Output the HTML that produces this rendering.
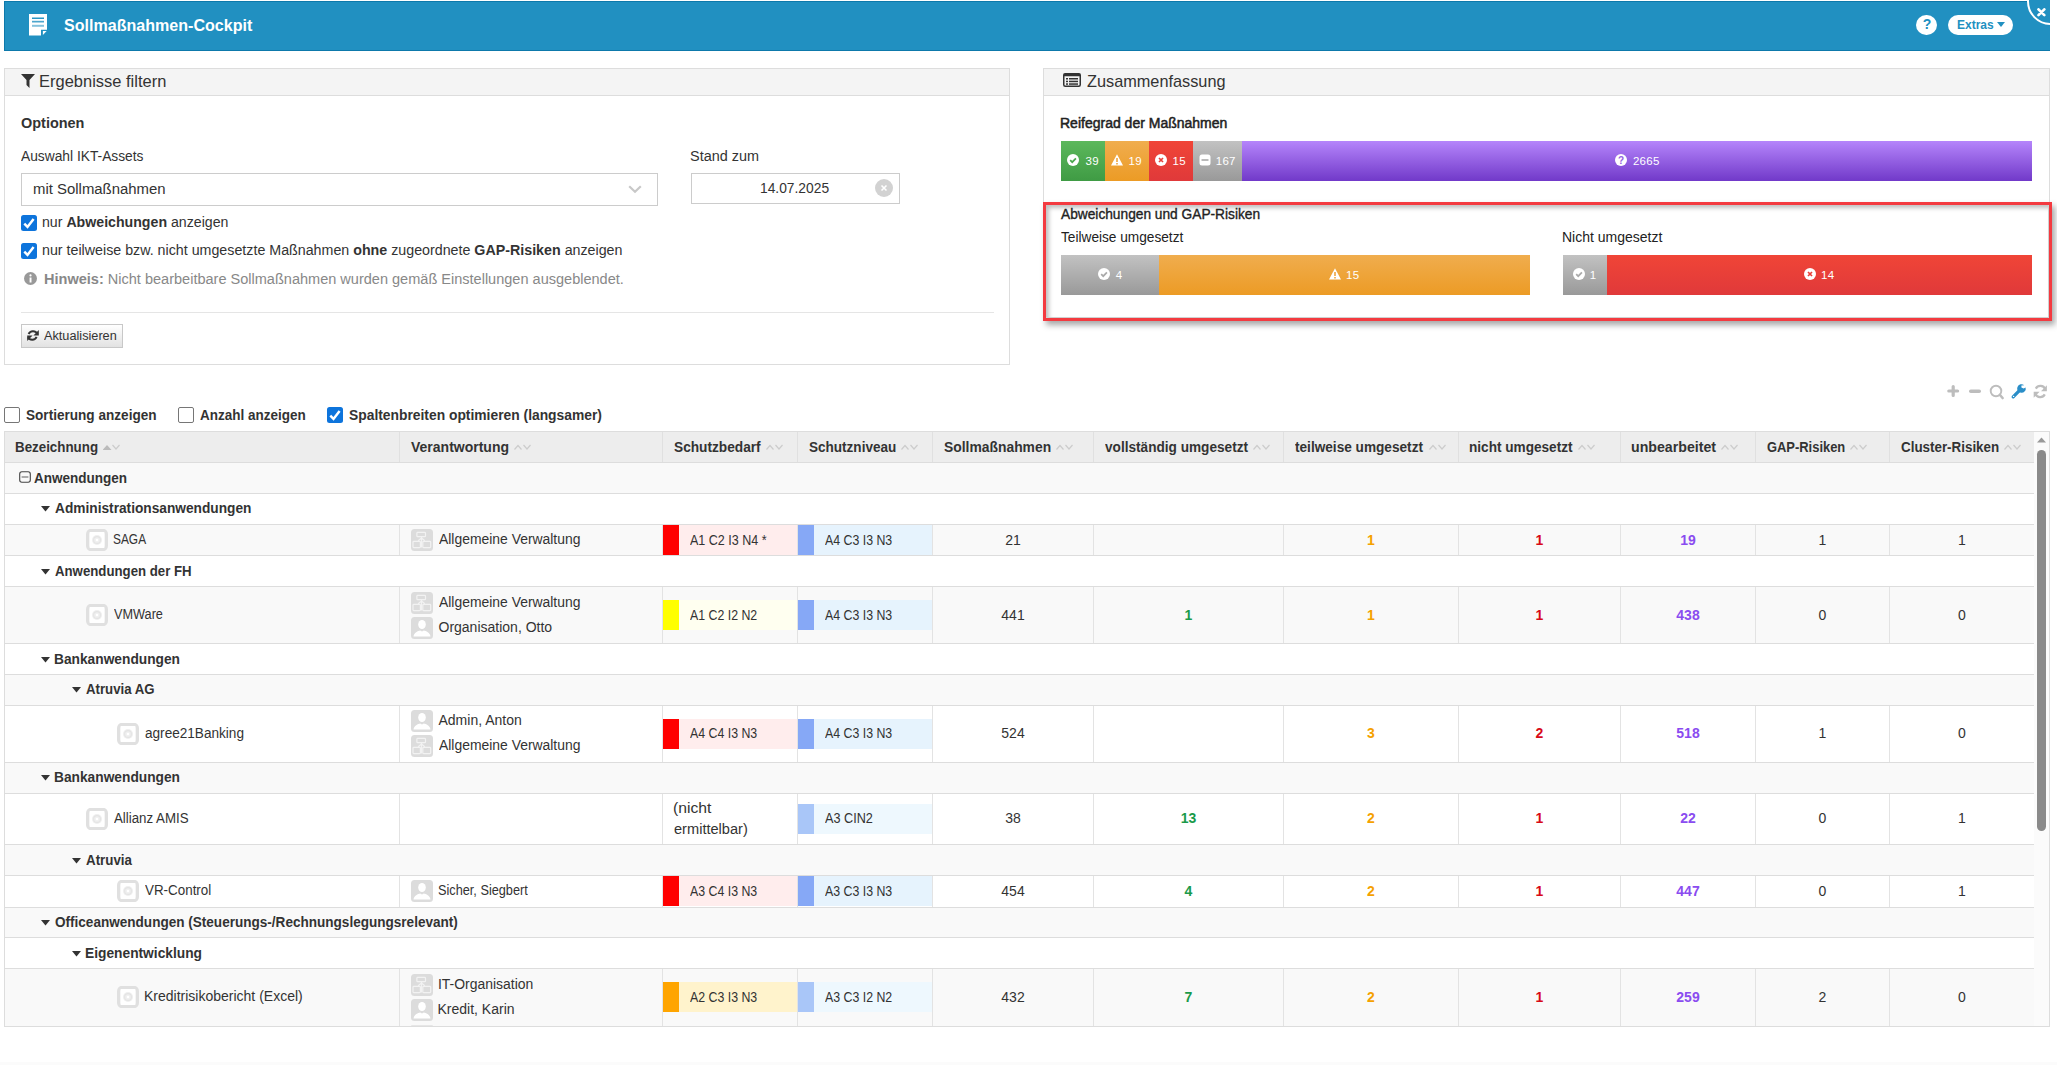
<!DOCTYPE html><html><head><meta charset="utf-8"><style>
html,body{margin:0;padding:0;width:2057px;height:1065px;overflow:hidden;background:#fff;font-family:"Liberation Sans", sans-serif;position:relative}
b{font-weight:700}
</style></head><body><div style="position:absolute;left:4px;top:1px;width:2046px;height:50px;background:#2190c1;box-sizing:border-box;border-top:1px solid #0d79ab;border-bottom:1px solid #0d79ab;border-left:1px solid #0d79ab"></div><div style="position:absolute;left:2020px;top:0px;width:30px;height:30px;overflow:hidden"><div style="position:absolute;left:7.2px;top:-22.2px;width:43px;height:43px;border:2px solid #fff;border-radius:50%;background:#2190c1"></div></div><svg style="position:absolute;left:29px;top:14px" width="19" height="22" viewBox="0 0 19 22"><path d="M0 0H18V15.7H12V21.4H0Z" fill="#fff"/><path d="M13.9 17.1H17.6L13.9 21Z" fill="#fff"/><rect x="3" y="3.5" width="12" height="1.5" fill="#2190c1" opacity="0.95"/><rect x="3" y="6.8" width="12" height="1.7" fill="#2190c1" opacity="0.8"/><rect x="3" y="10.8" width="12" height="2" fill="#2190c1" opacity="0.55"/></svg><div style="position:absolute;left:64.00px;top:17px;line-height:17px;font-size:17px;font-weight:700;color:#fff;white-space:pre;"><span id="t0" style="display:inline-block;transform-origin:left;transform:scaleX(0.9450)">Sollmaßnahmen-Cockpit</span></div><svg style="position:absolute;left:2036.5px;top:8px" width="9" height="8.5" viewBox="0 0 9 8.5"><path d="M1.5 1.4L7.3 7.1M7.3 1.4L1.5 7.1" stroke="#fff" stroke-width="2.7" stroke-linecap="round"/></svg><div style="position:absolute;left:1916px;top:14.5px;width:21px;height:20.5px;border-radius:50%;background:#fff"></div><div style="position:absolute;left:927px;width:2000px;text-align:center;top:17px;line-height:14px;font-size:14px;font-weight:700;color:#2190c1;white-space:pre;"><span id="t1" style="display:inline-block;transform-origin:left;">?</span></div><div style="position:absolute;left:1948px;top:15px;width:65px;height:20px;border-radius:10px;background:#fff"></div><div style="position:absolute;left:1957.08px;top:18px;line-height:13px;font-size:13px;font-weight:700;color:#2190c1;white-space:pre;"><span id="t2" style="display:inline-block;transform-origin:left;transform:scaleX(0.9231)">Extras</span></div><svg style="position:absolute;left:1997px;top:22px" width="8" height="6" viewBox="0 0 8 6"><path d="M0 0H8L4 5Z" fill="#2190c1"/></svg><div style="position:absolute;left:4px;top:68px;width:1006px;height:297px;box-sizing:border-box;border:1px solid #ddd;background:#fff"></div><div style="position:absolute;left:5px;top:69px;width:1004px;height:27px;background:#f4f4f4;border-bottom:1px solid #ddd;box-sizing:border-box"></div><svg style="position:absolute;left:21px;top:74px" width="14" height="14" viewBox="0 0 14 14"><path d="M0 0H14L8.5 6V14L5.5 11V6Z" fill="#333"/></svg><div style="position:absolute;left:39.03px;top:73px;line-height:17px;font-size:17px;font-weight:400;color:#333;white-space:pre;"><span id="t3" style="display:inline-block;transform-origin:left;transform:scaleX(0.9692)">Ergebnisse filtern</span></div><div style="position:absolute;left:21.00px;top:116px;line-height:14px;font-size:14px;font-weight:700;color:#333;white-space:pre;"><span id="t4" style="display:inline-block;transform-origin:left;transform:scaleX(1.0328)">Optionen</span></div><div style="position:absolute;left:21.00px;top:149px;line-height:14px;font-size:14px;font-weight:400;color:#333;white-space:pre;"><span id="t5" style="display:inline-block;transform-origin:left;transform:scaleX(0.9839)">Auswahl IKT-Assets</span></div><div style="position:absolute;left:21px;top:173px;width:637px;height:33px;box-sizing:border-box;border:1px solid #ccc;background:#fff"></div><div style="position:absolute;left:32.93px;top:182px;line-height:14px;font-size:14px;font-weight:400;color:#333;white-space:pre;"><span id="t6" style="display:inline-block;transform-origin:left;transform:scaleX(1.0650)">mit Sollmaßnahmen</span></div><svg style="position:absolute;left:628px;top:185px" width="14" height="9" viewBox="0 0 14 9"><path d="M1.2 1.2L7 6.8L12.8 1.2" stroke="#c8c8c8" stroke-width="2.2" fill="none"/></svg><div style="position:absolute;left:689.97px;top:149px;line-height:14px;font-size:14px;font-weight:400;color:#333;white-space:pre;"><span id="t7" style="display:inline-block;transform-origin:left;transform:scaleX(1.0308)">Stand zum</span></div><div style="position:absolute;left:691px;top:173px;width:209px;height:31px;box-sizing:border-box;border:1px solid #ccc;background:#fff"></div><div style="position:absolute;left:-205px;width:2000px;text-align:center;top:181px;line-height:14px;font-size:14px;font-weight:400;color:#333;white-space:pre;"><span id="t8" style="display:inline-block;transform-origin:left;transform:scaleX(0.9855)">14.07.2025</span></div><div style="position:absolute;left:875px;top:179px;width:18px;height:18px;border-radius:50%;background:#d2d2d2"></div><svg style="position:absolute;left:880px;top:184px" width="8" height="8" viewBox="0 0 8 8"><path d="M1.5 1.5L6.5 6.5M6.5 1.5L1.5 6.5" stroke="#fff" stroke-width="1.6"/></svg><div style="position:absolute;left:21px;top:215px;width:16px;height:16px;border-radius:2.5px;background:#0d74dc"></div><svg style="position:absolute;left:21px;top:215px" width="16" height="16" viewBox="0 0 16 16"><path d="M3.3 8.7L6.5 11.9L12.6 3.9" stroke="#fff" stroke-width="2.5" fill="none"/></svg><div style="position:absolute;left:42.49px;top:215px;line-height:14px;font-size:14px;font-weight:400;color:#333;white-space:pre;"><span id="t9" style="display:inline-block;transform-origin:left;transform:scaleX(1.0109)">nur <b>Abweichungen</b> anzeigen</span></div><div style="position:absolute;left:21px;top:243px;width:16px;height:16px;border-radius:2.5px;background:#0d74dc"></div><svg style="position:absolute;left:21px;top:243px" width="16" height="16" viewBox="0 0 16 16"><path d="M3.3 8.7L6.5 11.9L12.6 3.9" stroke="#fff" stroke-width="2.5" fill="none"/></svg><div style="position:absolute;left:42.48px;top:243px;line-height:14px;font-size:14px;font-weight:400;color:#333;white-space:pre;"><span id="t10" style="display:inline-block;transform-origin:left;transform:scaleX(1.0176)">nur teilweise bzw. nicht umgesetzte Maßnahmen <b>ohne</b> zugeordnete <b>GAP-Risiken</b> anzeigen</span></div><svg style="position:absolute;left:24px;top:272px" width="13" height="13" viewBox="0 0 13 13"><circle cx="6.5" cy="6.5" r="6.5" fill="#999"/><rect x="5.6" y="5.5" width="1.9" height="5" fill="#fff"/><circle cx="6.5" cy="3.4" r="1.1" fill="#fff"/></svg><div style="position:absolute;left:43.96px;top:272px;line-height:14px;font-size:14px;font-weight:400;color:#888;white-space:pre;"><span id="t11" style="display:inline-block;transform-origin:left;transform:scaleX(1.0377)"><b>Hinweis:</b> Nicht bearbeitbare Sollmaßnahmen wurden gemäß Einstellungen ausgeblendet.</span></div><div style="position:absolute;left:21px;top:312px;width:973px;height:1px;background:#e5e5e5"></div><div style="position:absolute;left:21px;top:324px;width:102px;height:24px;box-sizing:border-box;border:1px solid #c8c8c8;background:linear-gradient(#fff,#e2e2e2)"></div><svg style="position:absolute;left:26px;top:329px" width="14" height="13" viewBox="0 0 14 13"><path d="M11.3 4.6A4.9 4.9 0 0 0 2.6 5" stroke="#333" stroke-width="2" fill="none"/><path d="M12.8 1V6.4H7.4Z" fill="#333"/><path d="M1.9 8.2A4.9 4.9 0 0 0 10.6 7.8" stroke="#333" stroke-width="2" fill="none"/><path d="M1.2 11.9V6.5H6.6Z" fill="#333"/></svg><div style="position:absolute;left:44.00px;top:330px;line-height:12px;font-size:12px;font-weight:400;color:#333;white-space:pre;"><span id="t12" style="display:inline-block;transform-origin:left;transform:scaleX(1.0588)">Aktualisieren</span></div><div style="position:absolute;left:1043px;top:68px;width:1007px;height:140px;box-sizing:border-box;border:1px solid #ddd;border-bottom:none;background:#fff"></div><div style="position:absolute;left:1044px;top:69px;width:1005px;height:27px;background:#f4f4f4;border-bottom:1px solid #ddd;box-sizing:border-box"></div><svg style="position:absolute;left:1063px;top:73px" width="18" height="14" viewBox="0 0 18 14"><rect x="0.75" y="0.75" width="16.5" height="12.5" rx="1.5" fill="none" stroke="#333" stroke-width="1.5"/><rect x="0.75" y="0.75" width="16.5" height="2.5" fill="#333"/><rect x="3" y="5" width="2" height="1.5" fill="#333"/><rect x="6" y="5" width="9" height="1.5" fill="#333"/><rect x="3" y="7.7" width="2" height="1.5" fill="#333"/><rect x="6" y="7.7" width="9" height="1.5" fill="#333"/><rect x="3" y="10.3" width="2" height="1.5" fill="#333"/><rect x="6" y="10.3" width="9" height="1.5" fill="#333"/></svg><div style="position:absolute;left:1087.00px;top:73px;line-height:17px;font-size:17px;font-weight:400;color:#333;white-space:pre;"><span id="t13" style="display:inline-block;transform-origin:left;transform:scaleX(0.9583)">Zusammenfassung</span></div><div style="position:absolute;left:1060.00px;top:116px;line-height:14px;font-size:14px;font-weight:400;color:#222;white-space:pre;-webkit-text-stroke:0.5px #222;"><span id="t14" style="display:inline-block;transform-origin:left;">Reifegrad der Maßnahmen</span></div><div style="position:absolute;left:1061px;top:141px;width:44px;height:40px;background:linear-gradient(#5cb85c,#3f9b44)"></div><svg style="position:absolute;left:1067.3px;top:154.1px" width="12" height="12" viewBox="0 0 12 12"><circle cx="6" cy="6" r="6" fill="#fff"/><path d="M3.2 6.2L5.2 8.2L8.9 4.3" stroke="#4aa84d" stroke-width="1.7" fill="none"/></svg><div style="position:absolute;left:1085.50px;top:156px;line-height:11.5px;font-size:11.5px;font-weight:400;color:#fff;white-space:pre;letter-spacing:0.3px;"><span id="t15" style="display:inline-block;transform-origin:left;">39</span></div><div style="position:absolute;left:1105px;top:141px;width:44px;height:40px;background:linear-gradient(#f0ad4e,#ec9b25)"></div><svg style="position:absolute;left:1111.3px;top:154.1px" width="12" height="12" viewBox="0 0 12 12"><path d="M6 0.3L12 11.5H0Z" fill="#fff"/><rect x="5.2" y="4" width="1.6" height="4" fill="#eea53f"/><rect x="5.2" y="9" width="1.6" height="1.5" fill="#eea53f"/></svg><div style="position:absolute;left:1128.50px;top:156px;line-height:11.5px;font-size:11.5px;font-weight:400;color:#fff;white-space:pre;letter-spacing:0.3px;"><span id="t16" style="display:inline-block;transform-origin:left;">19</span></div><div style="position:absolute;left:1149px;top:141px;width:44px;height:40px;background:linear-gradient(#f04537,#e0393a)"></div><svg style="position:absolute;left:1155.3px;top:154.1px" width="12" height="12" viewBox="0 0 12 12"><circle cx="6" cy="6" r="6" fill="#fff"/><path d="M4 4L8 8M8 4L4 8" stroke="#e8403a" stroke-width="1.7"/></svg><div style="position:absolute;left:1172.50px;top:156px;line-height:11.5px;font-size:11.5px;font-weight:400;color:#fff;white-space:pre;letter-spacing:0.3px;"><span id="t17" style="display:inline-block;transform-origin:left;">15</span></div><div style="position:absolute;left:1193px;top:141px;width:49px;height:40px;background:linear-gradient(#c2c2c2,#999)"></div><svg style="position:absolute;left:1198.5px;top:154.1px" width="12" height="12" viewBox="0 0 12 12"><rect x="0.5" y="0.5" width="11" height="11" rx="2.5" fill="#fff"/><rect x="2.5" y="5.2" width="7" height="1.6" fill="#aaa"/></svg><div style="position:absolute;left:1215.70px;top:156px;line-height:11.5px;font-size:11.5px;font-weight:400;color:#fff;white-space:pre;letter-spacing:0.3px;"><span id="t18" style="display:inline-block;transform-origin:left;">167</span></div><div style="position:absolute;left:1242px;top:141px;width:790px;height:40px;background:linear-gradient(#b585fb,#7139c9)"></div><svg style="position:absolute;left:1614.7px;top:154.1px" width="12" height="12" viewBox="0 0 12 12"><circle cx="6" cy="6" r="6" fill="#fff"/><text x="6" y="9.7" font-family="Liberation Sans" font-weight="700" font-size="10" text-anchor="middle" fill="#9460e0">?</text></svg><div style="position:absolute;left:1632.90px;top:156px;line-height:11.5px;font-size:11.5px;font-weight:400;color:#fff;white-space:pre;letter-spacing:0.3px;"><span id="t19" style="display:inline-block;transform-origin:left;">2665</span></div><div style="position:absolute;left:1043px;top:202px;width:1009px;height:119px;box-sizing:border-box;border:3px solid #f33a40;background:#fff;box-shadow:3px 4px 6px rgba(0,0,0,0.35), inset 3px 3px 4px rgba(0,0,0,0.25)"></div><div style="position:absolute;left:1046px;top:205px;width:1003px;height:113px;box-sizing:border-box;border-right:1px solid #d0d0d0;border-bottom:1px solid #d0d0d0"></div><div style="position:absolute;left:1061.00px;top:207px;line-height:14px;font-size:14px;font-weight:400;color:#222;white-space:pre;-webkit-text-stroke:0.35px #222;"><span id="t20" style="display:inline-block;transform-origin:left;transform:scaleX(0.9803)">Abweichungen und GAP-Risiken</span></div><div style="position:absolute;left:1061.00px;top:230px;line-height:14px;font-size:14px;font-weight:400;color:#222;white-space:pre;"><span id="t21" style="display:inline-block;transform-origin:left;transform:scaleX(0.9762)">Teilweise umgesetzt</span></div><div style="position:absolute;left:1562.00px;top:230px;line-height:14px;font-size:14px;font-weight:400;color:#222;white-space:pre;"><span id="t22" style="display:inline-block;transform-origin:left;">Nicht umgesetzt</span></div><div style="position:absolute;left:1061px;top:255px;width:98px;height:40px;background:linear-gradient(#c2c2c2,#999)"></div><svg style="position:absolute;left:1097.6px;top:268.1px" width="12" height="12" viewBox="0 0 12 12"><circle cx="6" cy="6" r="6" fill="#fff"/><path d="M3.2 6.2L5.2 8.2L8.9 4.3" stroke="#aaa" stroke-width="1.7" fill="none"/></svg><div style="position:absolute;left:1115.80px;top:270px;line-height:11.5px;font-size:11.5px;font-weight:400;color:#fff;white-space:pre;letter-spacing:0.3px;"><span id="t23" style="display:inline-block;transform-origin:left;">4</span></div><div style="position:absolute;left:1159px;top:255px;width:371px;height:40px;background:linear-gradient(#f0ad4e,#ec9b25)"></div><svg style="position:absolute;left:1328.8px;top:268.1px" width="12" height="12" viewBox="0 0 12 12"><path d="M6 0.3L12 11.5H0Z" fill="#fff"/><rect x="5.2" y="4" width="1.6" height="4" fill="#eea53f"/><rect x="5.2" y="9" width="1.6" height="1.5" fill="#eea53f"/></svg><div style="position:absolute;left:1346.00px;top:270px;line-height:11.5px;font-size:11.5px;font-weight:400;color:#fff;white-space:pre;letter-spacing:0.3px;"><span id="t24" style="display:inline-block;transform-origin:left;">15</span></div><div style="position:absolute;left:1563px;top:255px;width:44px;height:40px;background:linear-gradient(#c2c2c2,#999)"></div><svg style="position:absolute;left:1572.6px;top:268.1px" width="12" height="12" viewBox="0 0 12 12"><circle cx="6" cy="6" r="6" fill="#fff"/><path d="M3.2 6.2L5.2 8.2L8.9 4.3" stroke="#aaa" stroke-width="1.7" fill="none"/></svg><div style="position:absolute;left:1589.80px;top:270px;line-height:11.5px;font-size:11.5px;font-weight:400;color:#fff;white-space:pre;letter-spacing:0.3px;"><span id="t25" style="display:inline-block;transform-origin:left;">1</span></div><div style="position:absolute;left:1607px;top:255px;width:425px;height:40px;background:linear-gradient(#f04537,#e0393a)"></div><svg style="position:absolute;left:1803.8px;top:268.1px" width="12" height="12" viewBox="0 0 12 12"><circle cx="6" cy="6" r="6" fill="#fff"/><path d="M4 4L8 8M8 4L4 8" stroke="#e8403a" stroke-width="1.7"/></svg><div style="position:absolute;left:1821.00px;top:270px;line-height:11.5px;font-size:11.5px;font-weight:400;color:#fff;white-space:pre;letter-spacing:0.3px;"><span id="t26" style="display:inline-block;transform-origin:left;">14</span></div><div style="position:absolute;left:4px;top:407px;width:16px;height:16px;border-radius:2px;box-sizing:border-box;border:1px solid #767676;background:#fff"></div><div style="position:absolute;left:26.00px;top:408px;line-height:14px;font-size:14px;font-weight:700;color:#333;white-space:pre;"><span id="t27" style="display:inline-block;transform-origin:left;transform:scaleX(0.9701)">Sortierung anzeigen</span></div><div style="position:absolute;left:178px;top:407px;width:16px;height:16px;border-radius:2px;box-sizing:border-box;border:1px solid #767676;background:#fff"></div><div style="position:absolute;left:200.00px;top:408px;line-height:14px;font-size:14px;font-weight:700;color:#333;white-space:pre;"><span id="t28" style="display:inline-block;transform-origin:left;transform:scaleX(0.9633)">Anzahl anzeigen</span></div><div style="position:absolute;left:327px;top:407px;width:16px;height:16px;border-radius:2.5px;background:#0d74dc"></div><svg style="position:absolute;left:327px;top:407px" width="16" height="16" viewBox="0 0 16 16"><path d="M3.3 8.7L6.5 11.9L12.6 3.9" stroke="#fff" stroke-width="2.5" fill="none"/></svg><div style="position:absolute;left:349.00px;top:408px;line-height:14px;font-size:14px;font-weight:700;color:#333;white-space:pre;"><span id="t29" style="display:inline-block;transform-origin:left;transform:scaleX(0.9883)">Spaltenbreiten optimieren (langsamer)</span></div><svg style="position:absolute;left:1940px;top:380px" width="117" height="25" viewBox="1940 380 117 25"><path d="M1953.2 386.6V395.4M1948.8 391H1957.6" stroke="#bdbdbd" stroke-width="3.2" stroke-linecap="round"/><path d="M1970.75 391.2H1979.25" stroke="#bdbdbd" stroke-width="3.5" stroke-linecap="round"/><circle cx="1996" cy="391" r="5.3" stroke="#bdbdbd" stroke-width="1.9" fill="none"/><path d="M2000 395L2002.6 398" stroke="#bdbdbd" stroke-width="2.6" stroke-linecap="round"/><path d="M2013.2 396.8L2019.8 390.2" stroke="#2a8ec8" stroke-width="3.3" stroke-linecap="round"/><path d="M2024.2 385.2A4.3 4.3 0 1 0 2025.6 387.4L2023.6 388.6L2021.4 387.6L2021.4 385.6Z" fill="#2a8ec8"/><circle cx="2013.6" cy="396.4" r="0.7" fill="#fff"/><path d="M2045.2 389.2A5.2 5.2 0 0 0 2035.8 388.6" stroke="#bdbdbd" stroke-width="2.2" fill="none"/><path d="M2046.9 385.2V391.2H2041Z" fill="#bdbdbd"/><path d="M2035.4 393.8A5.2 5.2 0 0 0 2044.8 394.4" stroke="#bdbdbd" stroke-width="2.2" fill="none"/><path d="M2033.7 397.8V391.8H2039.6Z" fill="#bdbdbd"/></svg><div style="position:absolute;left:4px;top:431px;width:2046px;height:596px;box-sizing:border-box;border:1px solid #ddd;background:#fff"></div><div style="position:absolute;left:5px;top:432px;width:2029px;height:30px;background:#ededed"></div><div style="position:absolute;left:5px;top:463px;width:2029px;height:30px;background:#f9f9f9"></div><div style="position:absolute;left:5px;top:494px;width:2029px;height:30px;background:#fff"></div><div style="position:absolute;left:5px;top:525px;width:2029px;height:30px;background:#f9f9f9"></div><div style="position:absolute;left:5px;top:556px;width:2029px;height:30px;background:#fff"></div><div style="position:absolute;left:5px;top:587px;width:2029px;height:56px;background:#f9f9f9"></div><div style="position:absolute;left:5px;top:644px;width:2029px;height:30px;background:#fff"></div><div style="position:absolute;left:5px;top:675px;width:2029px;height:30px;background:#f9f9f9"></div><div style="position:absolute;left:5px;top:706px;width:2029px;height:56px;background:#fff"></div><div style="position:absolute;left:5px;top:763px;width:2029px;height:30px;background:#f9f9f9"></div><div style="position:absolute;left:5px;top:794px;width:2029px;height:50px;background:#fff"></div><div style="position:absolute;left:5px;top:845px;width:2029px;height:30px;background:#f9f9f9"></div><div style="position:absolute;left:5px;top:876px;width:2029px;height:31px;background:#fff"></div><div style="position:absolute;left:5px;top:908px;width:2029px;height:29px;background:#f9f9f9"></div><div style="position:absolute;left:5px;top:938px;width:2029px;height:30px;background:#fff"></div><div style="position:absolute;left:5px;top:969px;width:2029px;height:57px;background:#f9f9f9"></div><div style="position:absolute;left:5px;top:462px;width:2029px;height:1px;background:#ddd"></div><div style="position:absolute;left:5px;top:493px;width:2029px;height:1px;background:#ddd"></div><div style="position:absolute;left:5px;top:524px;width:2029px;height:1px;background:#ddd"></div><div style="position:absolute;left:5px;top:555px;width:2029px;height:1px;background:#ddd"></div><div style="position:absolute;left:5px;top:586px;width:2029px;height:1px;background:#ddd"></div><div style="position:absolute;left:5px;top:643px;width:2029px;height:1px;background:#ddd"></div><div style="position:absolute;left:5px;top:674px;width:2029px;height:1px;background:#ddd"></div><div style="position:absolute;left:5px;top:705px;width:2029px;height:1px;background:#ddd"></div><div style="position:absolute;left:5px;top:762px;width:2029px;height:1px;background:#ddd"></div><div style="position:absolute;left:5px;top:793px;width:2029px;height:1px;background:#ddd"></div><div style="position:absolute;left:5px;top:844px;width:2029px;height:1px;background:#ddd"></div><div style="position:absolute;left:5px;top:875px;width:2029px;height:1px;background:#ddd"></div><div style="position:absolute;left:5px;top:907px;width:2029px;height:1px;background:#ddd"></div><div style="position:absolute;left:5px;top:937px;width:2029px;height:1px;background:#ddd"></div><div style="position:absolute;left:5px;top:968px;width:2029px;height:1px;background:#ddd"></div><div style="position:absolute;left:399px;top:432px;width:1px;height:30px;background:#e0e0e0"></div><div style="position:absolute;left:662px;top:432px;width:1px;height:30px;background:#e0e0e0"></div><div style="position:absolute;left:797px;top:432px;width:1px;height:30px;background:#e0e0e0"></div><div style="position:absolute;left:932px;top:432px;width:1px;height:30px;background:#e0e0e0"></div><div style="position:absolute;left:1093px;top:432px;width:1px;height:30px;background:#e0e0e0"></div><div style="position:absolute;left:1283px;top:432px;width:1px;height:30px;background:#e0e0e0"></div><div style="position:absolute;left:1458px;top:432px;width:1px;height:30px;background:#e0e0e0"></div><div style="position:absolute;left:1620px;top:432px;width:1px;height:30px;background:#e0e0e0"></div><div style="position:absolute;left:1755px;top:432px;width:1px;height:30px;background:#e0e0e0"></div><div style="position:absolute;left:1889px;top:432px;width:1px;height:30px;background:#e0e0e0"></div><div style="position:absolute;left:15.05px;top:440px;line-height:14px;font-size:14px;font-weight:700;color:#333;white-space:pre;"><span id="t30" style="display:inline-block;transform-origin:left;transform:scaleX(0.9535)">Bezeichnung</span></div><svg style="position:absolute;left:103.0px;top:443px" width="18" height="8" viewBox="0 0 18 8"><path d="M-0.5 7L4 2L8.5 7Z" fill="#bbb"/><path d="M9.5 2L13 6L16.5 2" stroke="#ccc" stroke-width="1.2" fill="none"/></svg><div style="position:absolute;left:411.00px;top:440px;line-height:14px;font-size:14px;font-weight:700;color:#333;white-space:pre;"><span id="t31" style="display:inline-block;transform-origin:left;">Verantwortung</span></div><svg style="position:absolute;left:514.0px;top:443px" width="18" height="8" viewBox="0 0 18 8"><path d="M0.5 6.5L4 2.5L7.5 6.5" stroke="#ccc" stroke-width="1.2" fill="none"/><path d="M9.5 2L13 6L16.5 2" stroke="#ccc" stroke-width="1.2" fill="none"/></svg><div style="position:absolute;left:674.00px;top:440px;line-height:14px;font-size:14px;font-weight:700;color:#333;white-space:pre;"><span id="t32" style="display:inline-block;transform-origin:left;transform:scaleX(0.9775)">Schutzbedarf</span></div><svg style="position:absolute;left:766.0px;top:443px" width="18" height="8" viewBox="0 0 18 8"><path d="M0.5 6.5L4 2.5L7.5 6.5" stroke="#ccc" stroke-width="1.2" fill="none"/><path d="M9.5 2L13 6L16.5 2" stroke="#ccc" stroke-width="1.2" fill="none"/></svg><div style="position:absolute;left:809.00px;top:440px;line-height:14px;font-size:14px;font-weight:700;color:#333;white-space:pre;"><span id="t33" style="display:inline-block;transform-origin:left;transform:scaleX(0.9667)">Schutzniveau</span></div><svg style="position:absolute;left:901.0px;top:443px" width="18" height="8" viewBox="0 0 18 8"><path d="M0.5 6.5L4 2.5L7.5 6.5" stroke="#ccc" stroke-width="1.2" fill="none"/><path d="M9.5 2L13 6L16.5 2" stroke="#ccc" stroke-width="1.2" fill="none"/></svg><div style="position:absolute;left:944.00px;top:440px;line-height:14px;font-size:14px;font-weight:700;color:#333;white-space:pre;"><span id="t34" style="display:inline-block;transform-origin:left;transform:scaleX(0.9907)">Sollmaßnahmen</span></div><svg style="position:absolute;left:1056.0px;top:443px" width="18" height="8" viewBox="0 0 18 8"><path d="M0.5 6.5L4 2.5L7.5 6.5" stroke="#ccc" stroke-width="1.2" fill="none"/><path d="M9.5 2L13 6L16.5 2" stroke="#ccc" stroke-width="1.2" fill="none"/></svg><div style="position:absolute;left:1105.00px;top:440px;line-height:14px;font-size:14px;font-weight:700;color:#333;white-space:pre;"><span id="t35" style="display:inline-block;transform-origin:left;transform:scaleX(0.9728)">vollständig umgesetzt</span></div><svg style="position:absolute;left:1253.0px;top:443px" width="18" height="8" viewBox="0 0 18 8"><path d="M0.5 6.5L4 2.5L7.5 6.5" stroke="#ccc" stroke-width="1.2" fill="none"/><path d="M9.5 2L13 6L16.5 2" stroke="#ccc" stroke-width="1.2" fill="none"/></svg><div style="position:absolute;left:1295.00px;top:440px;line-height:14px;font-size:14px;font-weight:700;color:#333;white-space:pre;"><span id="t36" style="display:inline-block;transform-origin:left;transform:scaleX(0.9735)">teilweise umgesetzt</span></div><svg style="position:absolute;left:1428.5px;top:443px" width="18" height="8" viewBox="0 0 18 8"><path d="M0.5 6.5L4 2.5L7.5 6.5" stroke="#ccc" stroke-width="1.2" fill="none"/><path d="M9.5 2L13 6L16.5 2" stroke="#ccc" stroke-width="1.2" fill="none"/></svg><div style="position:absolute;left:1469.03px;top:440px;line-height:14px;font-size:14px;font-weight:700;color:#333;white-space:pre;"><span id="t37" style="display:inline-block;transform-origin:left;transform:scaleX(0.9717)">nicht umgesetzt</span></div><svg style="position:absolute;left:1578.0px;top:443px" width="18" height="8" viewBox="0 0 18 8"><path d="M0.5 6.5L4 2.5L7.5 6.5" stroke="#ccc" stroke-width="1.2" fill="none"/><path d="M9.5 2L13 6L16.5 2" stroke="#ccc" stroke-width="1.2" fill="none"/></svg><div style="position:absolute;left:1630.99px;top:440px;line-height:14px;font-size:14px;font-weight:700;color:#333;white-space:pre;"><span id="t38" style="display:inline-block;transform-origin:left;transform:scaleX(1.0120)">unbearbeitet</span></div><svg style="position:absolute;left:1721.0px;top:443px" width="18" height="8" viewBox="0 0 18 8"><path d="M0.5 6.5L4 2.5L7.5 6.5" stroke="#ccc" stroke-width="1.2" fill="none"/><path d="M9.5 2L13 6L16.5 2" stroke="#ccc" stroke-width="1.2" fill="none"/></svg><div style="position:absolute;left:1767.00px;top:440px;line-height:14px;font-size:14px;font-weight:700;color:#333;white-space:pre;"><span id="t39" style="display:inline-block;transform-origin:left;transform:scaleX(0.9226)">GAP-Risiken</span></div><svg style="position:absolute;left:1849.5px;top:443px" width="18" height="8" viewBox="0 0 18 8"><path d="M0.5 6.5L4 2.5L7.5 6.5" stroke="#ccc" stroke-width="1.2" fill="none"/><path d="M9.5 2L13 6L16.5 2" stroke="#ccc" stroke-width="1.2" fill="none"/></svg><div style="position:absolute;left:1901.00px;top:440px;line-height:14px;font-size:14px;font-weight:700;color:#333;white-space:pre;"><span id="t40" style="display:inline-block;transform-origin:left;transform:scaleX(0.9559)">Cluster-Risiken</span></div><svg style="position:absolute;left:2003.5px;top:443px" width="18" height="8" viewBox="0 0 18 8"><path d="M0.5 6.5L4 2.5L7.5 6.5" stroke="#ccc" stroke-width="1.2" fill="none"/><path d="M9.5 2L13 6L16.5 2" stroke="#ccc" stroke-width="1.2" fill="none"/></svg><svg style="position:absolute;left:19px;top:470.5px" width="12" height="12" viewBox="0 0 12 12"><rect x="0.7" y="0.7" width="10.6" height="10.6" rx="2.2" fill="none" stroke="#444" stroke-width="1.1"/><path d="M2.6 6H9.4" stroke="#777" stroke-width="1.2"/></svg><div style="position:absolute;left:34.00px;top:471px;line-height:14px;font-size:14px;font-weight:700;color:#333;white-space:pre;"><span id="t41" style="display:inline-block;transform-origin:left;transform:scaleX(0.9646)">Anwendungen</span></div><svg style="position:absolute;left:41px;top:506.0px" width="9" height="6" viewBox="0 0 9 6"><path d="M0 0H9L4.5 5.5Z" fill="#333"/></svg><div style="position:absolute;left:54.50px;top:501px;line-height:14px;font-size:14px;font-weight:700;color:#333;white-space:pre;"><span id="t42" style="display:inline-block;transform-origin:left;transform:scaleX(0.9790)">Administrationsanwendungen</span></div><div style="position:absolute;left:399px;top:525px;width:1px;height:30px;background:#e3e3e3"></div><div style="position:absolute;left:662px;top:525px;width:1px;height:30px;background:#e3e3e3"></div><div style="position:absolute;left:797px;top:525px;width:1px;height:30px;background:#e3e3e3"></div><div style="position:absolute;left:932px;top:525px;width:1px;height:30px;background:#e3e3e3"></div><div style="position:absolute;left:1093px;top:525px;width:1px;height:30px;background:#e3e3e3"></div><div style="position:absolute;left:1283px;top:525px;width:1px;height:30px;background:#e3e3e3"></div><div style="position:absolute;left:1458px;top:525px;width:1px;height:30px;background:#e3e3e3"></div><div style="position:absolute;left:1620px;top:525px;width:1px;height:30px;background:#e3e3e3"></div><div style="position:absolute;left:1755px;top:525px;width:1px;height:30px;background:#e3e3e3"></div><div style="position:absolute;left:1889px;top:525px;width:1px;height:30px;background:#e3e3e3"></div><svg style="position:absolute;left:86px;top:529px" width="22" height="22" viewBox="0 0 22 22"><rect x="1.75" y="1.5" width="18.5" height="19" rx="3.5" fill="#fff" stroke="#e0e0e0" stroke-width="3.5"/><rect x="3.6" y="3" width="14.8" height="16" fill="#fff"/><circle cx="11" cy="11" r="5" fill="#efefef"/><circle cx="11" cy="11" r="3.4" fill="none" stroke="#e4e4e4" stroke-width="1.1"/><circle cx="11" cy="11" r="1.3" fill="#fff"/></svg><div style="position:absolute;left:113.15px;top:532px;line-height:14px;font-size:14px;font-weight:400;color:#333;white-space:pre;"><span id="t43" style="display:inline-block;transform-origin:left;transform:scaleX(0.8500)">SAGA</span></div><svg style="position:absolute;left:411px;top:529px" width="22" height="22" viewBox="0 0 22 22"><rect x="0" y="0" width="22" height="22" rx="3.5" fill="#dcdcdc"/><g fill="none" stroke="#f2f2f2" stroke-width="1.2"><rect x="5.9" y="3.4" width="8.6" height="4.3" rx="0.8"/><rect x="2" y="12.4" width="7.4" height="6.2" rx="0.8"/><rect x="11.8" y="12.4" width="7.9" height="6.2" rx="0.8"/><path d="M10.5 7.7V18.6M7.2 11.8L10.5 9L13.8 11.8"/></g></svg><div style="position:absolute;left:438.50px;top:532px;line-height:14px;font-size:14px;font-weight:400;color:#333;white-space:pre;"><span id="t44" style="display:inline-block;transform-origin:left;transform:scaleX(0.9930)">Allgemeine Verwaltung</span></div><div style="position:absolute;left:663px;top:525px;width:134px;height:30px;background:#ffeded"></div><div style="position:absolute;left:663px;top:525px;width:16px;height:30px;background:#ff0000"></div><div style="position:absolute;left:690.00px;top:533px;line-height:14px;font-size:14px;font-weight:400;color:#333;white-space:pre;"><span id="t45" style="display:inline-block;transform-origin:left;transform:scaleX(0.8941)">A1 C2 I3 N4 *</span></div><div style="position:absolute;left:798px;top:525px;width:134px;height:30px;background:#e6f3fd"></div><div style="position:absolute;left:798px;top:525px;width:16px;height:30px;background:#86a8f6"></div><div style="position:absolute;left:825.00px;top:533px;line-height:14px;font-size:14px;font-weight:400;color:#333;white-space:pre;"><span id="t46" style="display:inline-block;transform-origin:left;transform:scaleX(0.8816)">A4 C3 I3 N3</span></div><div style="position:absolute;left:13.0px;width:2000px;text-align:center;top:533px;line-height:14px;font-size:14px;font-weight:400;color:#333;white-space:pre;"><span id="t47" style="display:inline-block;transform-origin:left;">21</span></div><div style="position:absolute;left:371.0px;width:2000px;text-align:center;top:533px;line-height:14px;font-size:14px;font-weight:700;color:#f5a100;white-space:pre;"><span id="t48" style="display:inline-block;transform-origin:left;">1</span></div><div style="position:absolute;left:539.5px;width:2000px;text-align:center;top:533px;line-height:14px;font-size:14px;font-weight:700;color:#d80a18;white-space:pre;"><span id="t49" style="display:inline-block;transform-origin:left;">1</span></div><div style="position:absolute;left:688.0px;width:2000px;text-align:center;top:533px;line-height:14px;font-size:14px;font-weight:700;color:#8a4cf0;white-space:pre;"><span id="t50" style="display:inline-block;transform-origin:left;">19</span></div><div style="position:absolute;left:822.5px;width:2000px;text-align:center;top:533px;line-height:14px;font-size:14px;font-weight:400;color:#333;white-space:pre;"><span id="t51" style="display:inline-block;transform-origin:left;">1</span></div><div style="position:absolute;left:962.0px;width:2000px;text-align:center;top:533px;line-height:14px;font-size:14px;font-weight:400;color:#333;white-space:pre;"><span id="t52" style="display:inline-block;transform-origin:left;">1</span></div><svg style="position:absolute;left:41px;top:569.0px" width="9" height="6" viewBox="0 0 9 6"><path d="M0 0H9L4.5 5.5Z" fill="#333"/></svg><div style="position:absolute;left:54.50px;top:564px;line-height:14px;font-size:14px;font-weight:700;color:#333;white-space:pre;"><span id="t53" style="display:inline-block;transform-origin:left;transform:scaleX(0.9444)">Anwendungen der FH</span></div><div style="position:absolute;left:399px;top:587px;width:1px;height:56px;background:#e3e3e3"></div><div style="position:absolute;left:662px;top:587px;width:1px;height:56px;background:#e3e3e3"></div><div style="position:absolute;left:797px;top:587px;width:1px;height:56px;background:#e3e3e3"></div><div style="position:absolute;left:932px;top:587px;width:1px;height:56px;background:#e3e3e3"></div><div style="position:absolute;left:1093px;top:587px;width:1px;height:56px;background:#e3e3e3"></div><div style="position:absolute;left:1283px;top:587px;width:1px;height:56px;background:#e3e3e3"></div><div style="position:absolute;left:1458px;top:587px;width:1px;height:56px;background:#e3e3e3"></div><div style="position:absolute;left:1620px;top:587px;width:1px;height:56px;background:#e3e3e3"></div><div style="position:absolute;left:1755px;top:587px;width:1px;height:56px;background:#e3e3e3"></div><div style="position:absolute;left:1889px;top:587px;width:1px;height:56px;background:#e3e3e3"></div><svg style="position:absolute;left:86px;top:604px" width="22" height="22" viewBox="0 0 22 22"><rect x="1.75" y="1.5" width="18.5" height="19" rx="3.5" fill="#fff" stroke="#e0e0e0" stroke-width="3.5"/><rect x="3.6" y="3" width="14.8" height="16" fill="#fff"/><circle cx="11" cy="11" r="5" fill="#efefef"/><circle cx="11" cy="11" r="3.4" fill="none" stroke="#e4e4e4" stroke-width="1.1"/><circle cx="11" cy="11" r="1.3" fill="#fff"/></svg><div style="position:absolute;left:114.00px;top:607px;line-height:14px;font-size:14px;font-weight:400;color:#333;white-space:pre;"><span id="t54" style="display:inline-block;transform-origin:left;transform:scaleX(0.9074)">VMWare</span></div><svg style="position:absolute;left:411px;top:592px" width="22" height="22" viewBox="0 0 22 22"><rect x="0" y="0" width="22" height="22" rx="3.5" fill="#dcdcdc"/><g fill="none" stroke="#f2f2f2" stroke-width="1.2"><rect x="5.9" y="3.4" width="8.6" height="4.3" rx="0.8"/><rect x="2" y="12.4" width="7.4" height="6.2" rx="0.8"/><rect x="11.8" y="12.4" width="7.9" height="6.2" rx="0.8"/><path d="M10.5 7.7V18.6M7.2 11.8L10.5 9L13.8 11.8"/></g></svg><div style="position:absolute;left:438.50px;top:595px;line-height:14px;font-size:14px;font-weight:400;color:#333;white-space:pre;"><span id="t55" style="display:inline-block;transform-origin:left;transform:scaleX(0.9930)">Allgemeine Verwaltung</span></div><svg style="position:absolute;left:411px;top:617px" width="22" height="22" viewBox="0 0 22 22"><rect x="0" y="0" width="22" height="22" rx="3.5" fill="#dcdcdc"/><ellipse cx="11" cy="7.5" rx="3.8" ry="4.6" fill="#fff"/><path d="M2.5 19.5C3 15.5 7 14 9.2 13.5L11 14.5L12.8 13.5C15 14 19 15.5 19.5 19.5Z" fill="#fff"/></svg><div style="position:absolute;left:438.50px;top:620px;line-height:14px;font-size:14px;font-weight:400;color:#333;white-space:pre;"><span id="t56" style="display:inline-block;transform-origin:left;">Organisation, Otto</span></div><div style="position:absolute;left:663px;top:600px;width:134px;height:30px;background:#fffff0"></div><div style="position:absolute;left:663px;top:600px;width:16px;height:30px;background:#ffff00"></div><div style="position:absolute;left:690.00px;top:608px;line-height:14px;font-size:14px;font-weight:400;color:#333;white-space:pre;"><span id="t57" style="display:inline-block;transform-origin:left;transform:scaleX(0.8816)">A1 C2 I2 N2</span></div><div style="position:absolute;left:798px;top:600px;width:134px;height:30px;background:#e6f3fd"></div><div style="position:absolute;left:798px;top:600px;width:16px;height:30px;background:#86a8f6"></div><div style="position:absolute;left:825.00px;top:608px;line-height:14px;font-size:14px;font-weight:400;color:#333;white-space:pre;"><span id="t58" style="display:inline-block;transform-origin:left;transform:scaleX(0.8816)">A4 C3 I3 N3</span></div><div style="position:absolute;left:13.0px;width:2000px;text-align:center;top:608px;line-height:14px;font-size:14px;font-weight:400;color:#333;white-space:pre;"><span id="t59" style="display:inline-block;transform-origin:left;">441</span></div><div style="position:absolute;left:188.5px;width:2000px;text-align:center;top:608px;line-height:14px;font-size:14px;font-weight:700;color:#1a9a4a;white-space:pre;"><span id="t60" style="display:inline-block;transform-origin:left;">1</span></div><div style="position:absolute;left:371.0px;width:2000px;text-align:center;top:608px;line-height:14px;font-size:14px;font-weight:700;color:#f5a100;white-space:pre;"><span id="t61" style="display:inline-block;transform-origin:left;">1</span></div><div style="position:absolute;left:539.5px;width:2000px;text-align:center;top:608px;line-height:14px;font-size:14px;font-weight:700;color:#d80a18;white-space:pre;"><span id="t62" style="display:inline-block;transform-origin:left;">1</span></div><div style="position:absolute;left:688.0px;width:2000px;text-align:center;top:608px;line-height:14px;font-size:14px;font-weight:700;color:#8a4cf0;white-space:pre;"><span id="t63" style="display:inline-block;transform-origin:left;">438</span></div><div style="position:absolute;left:822.5px;width:2000px;text-align:center;top:608px;line-height:14px;font-size:14px;font-weight:400;color:#333;white-space:pre;"><span id="t64" style="display:inline-block;transform-origin:left;">0</span></div><div style="position:absolute;left:962.0px;width:2000px;text-align:center;top:608px;line-height:14px;font-size:14px;font-weight:400;color:#333;white-space:pre;"><span id="t65" style="display:inline-block;transform-origin:left;">0</span></div><svg style="position:absolute;left:41px;top:657.0px" width="9" height="6" viewBox="0 0 9 6"><path d="M0 0H9L4.5 5.5Z" fill="#333"/></svg><div style="position:absolute;left:53.52px;top:652px;line-height:14px;font-size:14px;font-weight:700;color:#333;white-space:pre;"><span id="t66" style="display:inline-block;transform-origin:left;transform:scaleX(0.9819)">Bankanwendungen</span></div><svg style="position:absolute;left:72px;top:687.0px" width="9" height="6" viewBox="0 0 9 6"><path d="M0 0H9L4.5 5.5Z" fill="#333"/></svg><div style="position:absolute;left:85.50px;top:682px;line-height:14px;font-size:14px;font-weight:700;color:#333;white-space:pre;"><span id="t67" style="display:inline-block;transform-origin:left;transform:scaleX(0.9444)">Atruvia AG</span></div><div style="position:absolute;left:399px;top:706px;width:1px;height:56px;background:#e3e3e3"></div><div style="position:absolute;left:662px;top:706px;width:1px;height:56px;background:#e3e3e3"></div><div style="position:absolute;left:797px;top:706px;width:1px;height:56px;background:#e3e3e3"></div><div style="position:absolute;left:932px;top:706px;width:1px;height:56px;background:#e3e3e3"></div><div style="position:absolute;left:1093px;top:706px;width:1px;height:56px;background:#e3e3e3"></div><div style="position:absolute;left:1283px;top:706px;width:1px;height:56px;background:#e3e3e3"></div><div style="position:absolute;left:1458px;top:706px;width:1px;height:56px;background:#e3e3e3"></div><div style="position:absolute;left:1620px;top:706px;width:1px;height:56px;background:#e3e3e3"></div><div style="position:absolute;left:1755px;top:706px;width:1px;height:56px;background:#e3e3e3"></div><div style="position:absolute;left:1889px;top:706px;width:1px;height:56px;background:#e3e3e3"></div><svg style="position:absolute;left:117px;top:723px" width="22" height="22" viewBox="0 0 22 22"><rect x="1.75" y="1.5" width="18.5" height="19" rx="3.5" fill="#fff" stroke="#e0e0e0" stroke-width="3.5"/><rect x="3.6" y="3" width="14.8" height="16" fill="#fff"/><circle cx="11" cy="11" r="5" fill="#efefef"/><circle cx="11" cy="11" r="3.4" fill="none" stroke="#e4e4e4" stroke-width="1.1"/><circle cx="11" cy="11" r="1.3" fill="#fff"/></svg><div style="position:absolute;left:145.00px;top:726px;line-height:14px;font-size:14px;font-weight:400;color:#333;white-space:pre;"><span id="t68" style="display:inline-block;transform-origin:left;transform:scaleX(0.9706)">agree21Banking</span></div><svg style="position:absolute;left:411px;top:710px" width="22" height="22" viewBox="0 0 22 22"><rect x="0" y="0" width="22" height="22" rx="3.5" fill="#dcdcdc"/><ellipse cx="11" cy="7.5" rx="3.8" ry="4.6" fill="#fff"/><path d="M2.5 19.5C3 15.5 7 14 9.2 13.5L11 14.5L12.8 13.5C15 14 19 15.5 19.5 19.5Z" fill="#fff"/></svg><div style="position:absolute;left:438.50px;top:713px;line-height:14px;font-size:14px;font-weight:400;color:#333;white-space:pre;"><span id="t69" style="display:inline-block;transform-origin:left;">Admin, Anton</span></div><svg style="position:absolute;left:411px;top:735px" width="22" height="22" viewBox="0 0 22 22"><rect x="0" y="0" width="22" height="22" rx="3.5" fill="#dcdcdc"/><g fill="none" stroke="#f2f2f2" stroke-width="1.2"><rect x="5.9" y="3.4" width="8.6" height="4.3" rx="0.8"/><rect x="2" y="12.4" width="7.4" height="6.2" rx="0.8"/><rect x="11.8" y="12.4" width="7.9" height="6.2" rx="0.8"/><path d="M10.5 7.7V18.6M7.2 11.8L10.5 9L13.8 11.8"/></g></svg><div style="position:absolute;left:438.50px;top:738px;line-height:14px;font-size:14px;font-weight:400;color:#333;white-space:pre;"><span id="t70" style="display:inline-block;transform-origin:left;transform:scaleX(0.9930)">Allgemeine Verwaltung</span></div><div style="position:absolute;left:663px;top:719px;width:134px;height:30px;background:#ffeded"></div><div style="position:absolute;left:663px;top:719px;width:16px;height:30px;background:#ff0000"></div><div style="position:absolute;left:690.00px;top:726px;line-height:14px;font-size:14px;font-weight:400;color:#333;white-space:pre;"><span id="t71" style="display:inline-block;transform-origin:left;transform:scaleX(0.8816)">A4 C4 I3 N3</span></div><div style="position:absolute;left:798px;top:719px;width:134px;height:30px;background:#e6f3fd"></div><div style="position:absolute;left:798px;top:719px;width:16px;height:30px;background:#86a8f6"></div><div style="position:absolute;left:825.00px;top:726px;line-height:14px;font-size:14px;font-weight:400;color:#333;white-space:pre;"><span id="t72" style="display:inline-block;transform-origin:left;transform:scaleX(0.8816)">A4 C3 I3 N3</span></div><div style="position:absolute;left:13.0px;width:2000px;text-align:center;top:726px;line-height:14px;font-size:14px;font-weight:400;color:#333;white-space:pre;"><span id="t73" style="display:inline-block;transform-origin:left;">524</span></div><div style="position:absolute;left:371.0px;width:2000px;text-align:center;top:726px;line-height:14px;font-size:14px;font-weight:700;color:#f5a100;white-space:pre;"><span id="t74" style="display:inline-block;transform-origin:left;">3</span></div><div style="position:absolute;left:539.5px;width:2000px;text-align:center;top:726px;line-height:14px;font-size:14px;font-weight:700;color:#d80a18;white-space:pre;"><span id="t75" style="display:inline-block;transform-origin:left;">2</span></div><div style="position:absolute;left:688.0px;width:2000px;text-align:center;top:726px;line-height:14px;font-size:14px;font-weight:700;color:#8a4cf0;white-space:pre;"><span id="t76" style="display:inline-block;transform-origin:left;">518</span></div><div style="position:absolute;left:822.5px;width:2000px;text-align:center;top:726px;line-height:14px;font-size:14px;font-weight:400;color:#333;white-space:pre;"><span id="t77" style="display:inline-block;transform-origin:left;">1</span></div><div style="position:absolute;left:962.0px;width:2000px;text-align:center;top:726px;line-height:14px;font-size:14px;font-weight:400;color:#333;white-space:pre;"><span id="t78" style="display:inline-block;transform-origin:left;">0</span></div><svg style="position:absolute;left:41px;top:775.0px" width="9" height="6" viewBox="0 0 9 6"><path d="M0 0H9L4.5 5.5Z" fill="#333"/></svg><div style="position:absolute;left:53.52px;top:770px;line-height:14px;font-size:14px;font-weight:700;color:#333;white-space:pre;"><span id="t79" style="display:inline-block;transform-origin:left;transform:scaleX(0.9819)">Bankanwendungen</span></div><div style="position:absolute;left:399px;top:794px;width:1px;height:50px;background:#e3e3e3"></div><div style="position:absolute;left:662px;top:794px;width:1px;height:50px;background:#e3e3e3"></div><div style="position:absolute;left:797px;top:794px;width:1px;height:50px;background:#e3e3e3"></div><div style="position:absolute;left:932px;top:794px;width:1px;height:50px;background:#e3e3e3"></div><div style="position:absolute;left:1093px;top:794px;width:1px;height:50px;background:#e3e3e3"></div><div style="position:absolute;left:1283px;top:794px;width:1px;height:50px;background:#e3e3e3"></div><div style="position:absolute;left:1458px;top:794px;width:1px;height:50px;background:#e3e3e3"></div><div style="position:absolute;left:1620px;top:794px;width:1px;height:50px;background:#e3e3e3"></div><div style="position:absolute;left:1755px;top:794px;width:1px;height:50px;background:#e3e3e3"></div><div style="position:absolute;left:1889px;top:794px;width:1px;height:50px;background:#e3e3e3"></div><svg style="position:absolute;left:86px;top:808px" width="22" height="22" viewBox="0 0 22 22"><rect x="1.75" y="1.5" width="18.5" height="19" rx="3.5" fill="#fff" stroke="#e0e0e0" stroke-width="3.5"/><rect x="3.6" y="3" width="14.8" height="16" fill="#fff"/><circle cx="11" cy="11" r="5" fill="#efefef"/><circle cx="11" cy="11" r="3.4" fill="none" stroke="#e4e4e4" stroke-width="1.1"/><circle cx="11" cy="11" r="1.3" fill="#fff"/></svg><div style="position:absolute;left:114.00px;top:811px;line-height:14px;font-size:14px;font-weight:400;color:#333;white-space:pre;"><span id="t80" style="display:inline-block;transform-origin:left;transform:scaleX(0.9487)">Allianz AMIS</span></div><div style="position:absolute;left:798px;top:804px;width:134px;height:30px;background:#eef8fe"></div><div style="position:absolute;left:798px;top:804px;width:16px;height:30px;background:#a9c6f8"></div><div style="position:absolute;left:825.00px;top:811px;line-height:14px;font-size:14px;font-weight:400;color:#333;white-space:pre;"><span id="t81" style="display:inline-block;transform-origin:left;transform:scaleX(0.9038)">A3 CIN2</span></div><div style="position:absolute;left:672.88px;top:801px;line-height:14px;font-size:14px;font-weight:400;color:#333;white-space:pre;"><span id="t82" style="display:inline-block;transform-origin:left;transform:scaleX(1.1212)">(nicht</span></div><div style="position:absolute;left:674.00px;top:822px;line-height:14px;font-size:14px;font-weight:400;color:#333;white-space:pre;"><span id="t83" style="display:inline-block;transform-origin:left;transform:scaleX(1.0429)">ermittelbar)</span></div><div style="position:absolute;left:13.0px;width:2000px;text-align:center;top:811px;line-height:14px;font-size:14px;font-weight:400;color:#333;white-space:pre;"><span id="t84" style="display:inline-block;transform-origin:left;">38</span></div><div style="position:absolute;left:188.5px;width:2000px;text-align:center;top:811px;line-height:14px;font-size:14px;font-weight:700;color:#1a9a4a;white-space:pre;"><span id="t85" style="display:inline-block;transform-origin:left;">13</span></div><div style="position:absolute;left:371.0px;width:2000px;text-align:center;top:811px;line-height:14px;font-size:14px;font-weight:700;color:#f5a100;white-space:pre;"><span id="t86" style="display:inline-block;transform-origin:left;">2</span></div><div style="position:absolute;left:539.5px;width:2000px;text-align:center;top:811px;line-height:14px;font-size:14px;font-weight:700;color:#d80a18;white-space:pre;"><span id="t87" style="display:inline-block;transform-origin:left;">1</span></div><div style="position:absolute;left:688.0px;width:2000px;text-align:center;top:811px;line-height:14px;font-size:14px;font-weight:700;color:#8a4cf0;white-space:pre;"><span id="t88" style="display:inline-block;transform-origin:left;">22</span></div><div style="position:absolute;left:822.5px;width:2000px;text-align:center;top:811px;line-height:14px;font-size:14px;font-weight:400;color:#333;white-space:pre;"><span id="t89" style="display:inline-block;transform-origin:left;">0</span></div><div style="position:absolute;left:962.0px;width:2000px;text-align:center;top:811px;line-height:14px;font-size:14px;font-weight:400;color:#333;white-space:pre;"><span id="t90" style="display:inline-block;transform-origin:left;">1</span></div><svg style="position:absolute;left:72px;top:858.0px" width="9" height="6" viewBox="0 0 9 6"><path d="M0 0H9L4.5 5.5Z" fill="#333"/></svg><div style="position:absolute;left:85.50px;top:853px;line-height:14px;font-size:14px;font-weight:700;color:#333;white-space:pre;"><span id="t91" style="display:inline-block;transform-origin:left;transform:scaleX(0.9531)">Atruvia</span></div><div style="position:absolute;left:399px;top:876px;width:1px;height:31px;background:#e3e3e3"></div><div style="position:absolute;left:662px;top:876px;width:1px;height:31px;background:#e3e3e3"></div><div style="position:absolute;left:797px;top:876px;width:1px;height:31px;background:#e3e3e3"></div><div style="position:absolute;left:932px;top:876px;width:1px;height:31px;background:#e3e3e3"></div><div style="position:absolute;left:1093px;top:876px;width:1px;height:31px;background:#e3e3e3"></div><div style="position:absolute;left:1283px;top:876px;width:1px;height:31px;background:#e3e3e3"></div><div style="position:absolute;left:1458px;top:876px;width:1px;height:31px;background:#e3e3e3"></div><div style="position:absolute;left:1620px;top:876px;width:1px;height:31px;background:#e3e3e3"></div><div style="position:absolute;left:1755px;top:876px;width:1px;height:31px;background:#e3e3e3"></div><div style="position:absolute;left:1889px;top:876px;width:1px;height:31px;background:#e3e3e3"></div><svg style="position:absolute;left:117px;top:880px" width="22" height="22" viewBox="0 0 22 22"><rect x="1.75" y="1.5" width="18.5" height="19" rx="3.5" fill="#fff" stroke="#e0e0e0" stroke-width="3.5"/><rect x="3.6" y="3" width="14.8" height="16" fill="#fff"/><circle cx="11" cy="11" r="5" fill="#efefef"/><circle cx="11" cy="11" r="3.4" fill="none" stroke="#e4e4e4" stroke-width="1.1"/><circle cx="11" cy="11" r="1.3" fill="#fff"/></svg><div style="position:absolute;left:145.00px;top:883px;line-height:14px;font-size:14px;font-weight:400;color:#333;white-space:pre;"><span id="t92" style="display:inline-block;transform-origin:left;transform:scaleX(0.9565)">VR-Control</span></div><svg style="position:absolute;left:411px;top:880px" width="22" height="22" viewBox="0 0 22 22"><rect x="0" y="0" width="22" height="22" rx="3.5" fill="#dcdcdc"/><ellipse cx="11" cy="7.5" rx="3.8" ry="4.6" fill="#fff"/><path d="M2.5 19.5C3 15.5 7 14 9.2 13.5L11 14.5L12.8 13.5C15 14 19 15.5 19.5 19.5Z" fill="#fff"/></svg><div style="position:absolute;left:437.59px;top:883px;line-height:14px;font-size:14px;font-weight:400;color:#333;white-space:pre;"><span id="t93" style="display:inline-block;transform-origin:left;transform:scaleX(0.9082)">Sicher, Siegbert</span></div><div style="position:absolute;left:663px;top:876px;width:134px;height:30px;background:#ffeded"></div><div style="position:absolute;left:663px;top:876px;width:16px;height:30px;background:#ff0000"></div><div style="position:absolute;left:690.00px;top:884px;line-height:14px;font-size:14px;font-weight:400;color:#333;white-space:pre;"><span id="t94" style="display:inline-block;transform-origin:left;transform:scaleX(0.8816)">A3 C4 I3 N3</span></div><div style="position:absolute;left:798px;top:876px;width:134px;height:30px;background:#e6f3fd"></div><div style="position:absolute;left:798px;top:876px;width:16px;height:30px;background:#86a8f6"></div><div style="position:absolute;left:825.00px;top:884px;line-height:14px;font-size:14px;font-weight:400;color:#333;white-space:pre;"><span id="t95" style="display:inline-block;transform-origin:left;transform:scaleX(0.8816)">A3 C3 I3 N3</span></div><div style="position:absolute;left:13.0px;width:2000px;text-align:center;top:884px;line-height:14px;font-size:14px;font-weight:400;color:#333;white-space:pre;"><span id="t96" style="display:inline-block;transform-origin:left;">454</span></div><div style="position:absolute;left:188.5px;width:2000px;text-align:center;top:884px;line-height:14px;font-size:14px;font-weight:700;color:#1a9a4a;white-space:pre;"><span id="t97" style="display:inline-block;transform-origin:left;">4</span></div><div style="position:absolute;left:371.0px;width:2000px;text-align:center;top:884px;line-height:14px;font-size:14px;font-weight:700;color:#f5a100;white-space:pre;"><span id="t98" style="display:inline-block;transform-origin:left;">2</span></div><div style="position:absolute;left:539.5px;width:2000px;text-align:center;top:884px;line-height:14px;font-size:14px;font-weight:700;color:#d80a18;white-space:pre;"><span id="t99" style="display:inline-block;transform-origin:left;">1</span></div><div style="position:absolute;left:688.0px;width:2000px;text-align:center;top:884px;line-height:14px;font-size:14px;font-weight:700;color:#8a4cf0;white-space:pre;"><span id="t100" style="display:inline-block;transform-origin:left;">447</span></div><div style="position:absolute;left:822.5px;width:2000px;text-align:center;top:884px;line-height:14px;font-size:14px;font-weight:400;color:#333;white-space:pre;"><span id="t101" style="display:inline-block;transform-origin:left;">0</span></div><div style="position:absolute;left:962.0px;width:2000px;text-align:center;top:884px;line-height:14px;font-size:14px;font-weight:400;color:#333;white-space:pre;"><span id="t102" style="display:inline-block;transform-origin:left;">1</span></div><svg style="position:absolute;left:41px;top:920.0px" width="9" height="6" viewBox="0 0 9 6"><path d="M0 0H9L4.5 5.5Z" fill="#333"/></svg><div style="position:absolute;left:54.50px;top:915px;line-height:14px;font-size:14px;font-weight:700;color:#333;white-space:pre;"><span id="t103" style="display:inline-block;transform-origin:left;transform:scaleX(0.9680)">Officeanwendungen (Steuerungs-/Rechnungslegungsrelevant)</span></div><svg style="position:absolute;left:72px;top:951.0px" width="9" height="6" viewBox="0 0 9 6"><path d="M0 0H9L4.5 5.5Z" fill="#333"/></svg><div style="position:absolute;left:84.52px;top:946px;line-height:14px;font-size:14px;font-weight:700;color:#333;white-space:pre;"><span id="t104" style="display:inline-block;transform-origin:left;transform:scaleX(0.9831)">Eigenentwicklung</span></div><div style="position:absolute;left:399px;top:969px;width:1px;height:57px;background:#e3e3e3"></div><div style="position:absolute;left:662px;top:969px;width:1px;height:57px;background:#e3e3e3"></div><div style="position:absolute;left:797px;top:969px;width:1px;height:57px;background:#e3e3e3"></div><div style="position:absolute;left:932px;top:969px;width:1px;height:57px;background:#e3e3e3"></div><div style="position:absolute;left:1093px;top:969px;width:1px;height:57px;background:#e3e3e3"></div><div style="position:absolute;left:1283px;top:969px;width:1px;height:57px;background:#e3e3e3"></div><div style="position:absolute;left:1458px;top:969px;width:1px;height:57px;background:#e3e3e3"></div><div style="position:absolute;left:1620px;top:969px;width:1px;height:57px;background:#e3e3e3"></div><div style="position:absolute;left:1755px;top:969px;width:1px;height:57px;background:#e3e3e3"></div><div style="position:absolute;left:1889px;top:969px;width:1px;height:57px;background:#e3e3e3"></div><svg style="position:absolute;left:117px;top:986px" width="22" height="22" viewBox="0 0 22 22"><rect x="1.75" y="1.5" width="18.5" height="19" rx="3.5" fill="#fff" stroke="#e0e0e0" stroke-width="3.5"/><rect x="3.6" y="3" width="14.8" height="16" fill="#fff"/><circle cx="11" cy="11" r="5" fill="#efefef"/><circle cx="11" cy="11" r="3.4" fill="none" stroke="#e4e4e4" stroke-width="1.1"/><circle cx="11" cy="11" r="1.3" fill="#fff"/></svg><div style="position:absolute;left:144.00px;top:989px;line-height:14px;font-size:14px;font-weight:400;color:#333;white-space:pre;"><span id="t105" style="display:inline-block;transform-origin:left;">Kreditrisikobericht (Excel)</span></div><svg style="position:absolute;left:411px;top:974px" width="22" height="22" viewBox="0 0 22 22"><rect x="0" y="0" width="22" height="22" rx="3.5" fill="#dcdcdc"/><g fill="none" stroke="#f2f2f2" stroke-width="1.2"><rect x="5.9" y="3.4" width="8.6" height="4.3" rx="0.8"/><rect x="2" y="12.4" width="7.4" height="6.2" rx="0.8"/><rect x="11.8" y="12.4" width="7.9" height="6.2" rx="0.8"/><path d="M10.5 7.7V18.6M7.2 11.8L10.5 9L13.8 11.8"/></g></svg><div style="position:absolute;left:437.50px;top:977px;line-height:14px;font-size:14px;font-weight:400;color:#333;white-space:pre;"><span id="t106" style="display:inline-block;transform-origin:left;transform:scaleX(0.9957)">IT-Organisation</span></div><svg style="position:absolute;left:411px;top:999px" width="22" height="22" viewBox="0 0 22 22"><rect x="0" y="0" width="22" height="22" rx="3.5" fill="#dcdcdc"/><ellipse cx="11" cy="7.5" rx="3.8" ry="4.6" fill="#fff"/><path d="M2.5 19.5C3 15.5 7 14 9.2 13.5L11 14.5L12.8 13.5C15 14 19 15.5 19.5 19.5Z" fill="#fff"/></svg><div style="position:absolute;left:437.50px;top:1002px;line-height:14px;font-size:14px;font-weight:400;color:#333;white-space:pre;"><span id="t107" style="display:inline-block;transform-origin:left;">Kredit, Karin</span></div><div style="position:absolute;left:663px;top:982px;width:134px;height:30px;background:#fff3cc"></div><div style="position:absolute;left:663px;top:982px;width:16px;height:30px;background:#ffa500"></div><div style="position:absolute;left:690.00px;top:990px;line-height:14px;font-size:14px;font-weight:400;color:#333;white-space:pre;"><span id="t108" style="display:inline-block;transform-origin:left;transform:scaleX(0.8816)">A2 C3 I3 N3</span></div><div style="position:absolute;left:798px;top:982px;width:134px;height:30px;background:#eef8fe"></div><div style="position:absolute;left:798px;top:982px;width:16px;height:30px;background:#a9c6f8"></div><div style="position:absolute;left:825.00px;top:990px;line-height:14px;font-size:14px;font-weight:400;color:#333;white-space:pre;"><span id="t109" style="display:inline-block;transform-origin:left;transform:scaleX(0.8816)">A3 C3 I2 N2</span></div><div style="position:absolute;left:13.0px;width:2000px;text-align:center;top:990px;line-height:14px;font-size:14px;font-weight:400;color:#333;white-space:pre;"><span id="t110" style="display:inline-block;transform-origin:left;">432</span></div><div style="position:absolute;left:188.5px;width:2000px;text-align:center;top:990px;line-height:14px;font-size:14px;font-weight:700;color:#1a9a4a;white-space:pre;"><span id="t111" style="display:inline-block;transform-origin:left;">7</span></div><div style="position:absolute;left:371.0px;width:2000px;text-align:center;top:990px;line-height:14px;font-size:14px;font-weight:700;color:#f5a100;white-space:pre;"><span id="t112" style="display:inline-block;transform-origin:left;">2</span></div><div style="position:absolute;left:539.5px;width:2000px;text-align:center;top:990px;line-height:14px;font-size:14px;font-weight:700;color:#d80a18;white-space:pre;"><span id="t113" style="display:inline-block;transform-origin:left;">1</span></div><div style="position:absolute;left:688.0px;width:2000px;text-align:center;top:990px;line-height:14px;font-size:14px;font-weight:700;color:#8a4cf0;white-space:pre;"><span id="t114" style="display:inline-block;transform-origin:left;">259</span></div><div style="position:absolute;left:822.5px;width:2000px;text-align:center;top:990px;line-height:14px;font-size:14px;font-weight:400;color:#333;white-space:pre;"><span id="t115" style="display:inline-block;transform-origin:left;">2</span></div><div style="position:absolute;left:962.0px;width:2000px;text-align:center;top:990px;line-height:14px;font-size:14px;font-weight:400;color:#333;white-space:pre;"><span id="t116" style="display:inline-block;transform-origin:left;">0</span></div><div style="position:absolute;left:411px;top:1025px;width:22px;height:1px;background:#e6e6e6;border-radius:3px 3px 0 0"></div><div style="position:absolute;left:2034px;top:432px;width:15px;height:594px;background:#fbfbfb"></div><svg style="position:absolute;left:2036px;top:436px" width="11" height="8" viewBox="0 0 11 8"><path d="M1 6.5L5.5 1.5L10 6.5Z" fill="#999"/></svg><div style="position:absolute;left:2037px;top:450px;width:9px;height:381px;background:#8a8a8a;border-radius:4.5px"></div><div style="position:absolute;left:0px;top:1062px;width:2057px;height:3px;background:#fbfbfb"></div></body></html>
